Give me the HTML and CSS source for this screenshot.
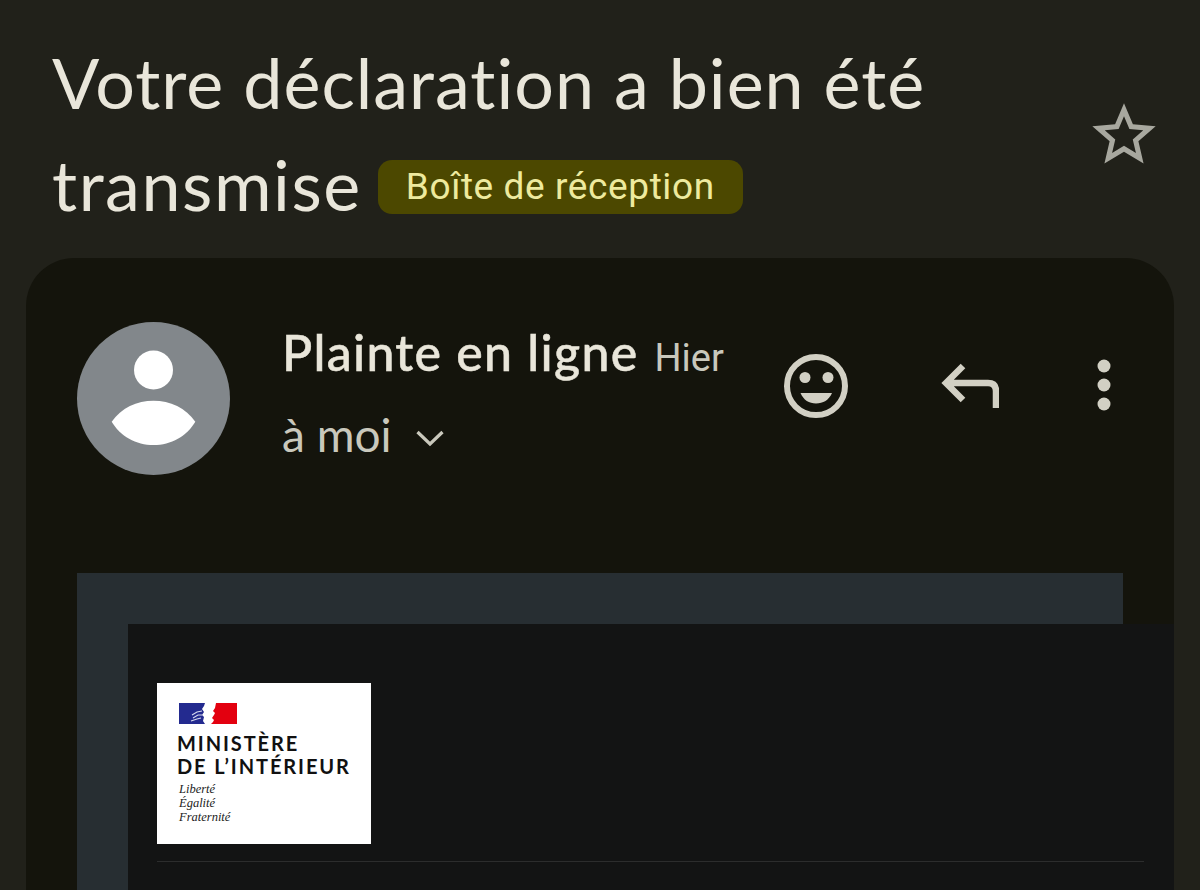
FILE: index.html
```html
<!DOCTYPE html>
<html lang="fr">
<head>
<meta charset="utf-8">
<title>Votre déclaration a bien été transmise</title>
<link rel="stylesheet" href="styles.css">
</head>
<body>
<div class="page">
  <header class="subject">
    <h1 class="title">Votre déclaration a bien été<br><span class="word">transmise</span><span class="chip">Boîte de réception</span></h1>
    <svg class="star" viewBox="0 0 24 24" aria-hidden="true"><path fill="#a8a89f" d="M22 9.24l-7.19-.62L12 2 9.19 8.63 2 9.24l5.46 4.73L5.82 21 12 17.27 18.18 21l-1.63-7.03L22 9.24zM12 15.4l-3.76 2.27 1-4.28-3.32-2.88 4.38-.38L12 6.1l1.71 4.04 4.38.38-3.32 2.88 1 4.28L12 15.4z"/></svg>
  </header>
  <main class="card">
    <div class="meta">
      <svg class="avatar" viewBox="0 0 153 153" aria-hidden="true">
        <circle cx="76.5" cy="76.5" r="76.5" fill="#82878b"/>
        <circle cx="76.5" cy="48" r="19.5" fill="#fff"/>
        <path d="M34.700 99.700C44 86 60 78.700 76.500 78.700C93 78.700 109 86 118.300 99.700C110 114 94 123 76.500 123C59 123 43 114 34.700 99.700Z" fill="#fff"/>
      </svg>
      <div class="who">
        <div class="line1"><span class="name">Plainte en ligne</span><span class="when">Hier</span></div>
        <div class="line2"><span>à moi</span>
          <svg class="chev" viewBox="0 0 30 18" aria-hidden="true"><path d="M2.500 3 15 15 27.500 3" fill="none" stroke="#c9c8bc" stroke-width="3.200"/></svg>
        </div>
      </div>
      <div class="actions">
        <svg class="act-smile" viewBox="0 0 66 66" aria-hidden="true">
          <circle cx="33" cy="33" r="29" fill="none" stroke="#d2d0c4" stroke-width="6"/>
          <circle cx="22" cy="24.500" r="5.500" fill="#d2d0c4"/><circle cx="45" cy="24.500" r="5.500" fill="#d2d0c4"/>
          <path d="M17.500 40H49C46 47 40 50.500 33 50.500S20.500 47 17.500 40Z" fill="#d2d0c4"/>
        </svg>
        <svg class="act-reply" viewBox="0 0 58 46" aria-hidden="true"><path d="M22 4 5 21 22 38M5 21H47Q55 21 55 29V46" fill="none" stroke="#d2d0c4" stroke-width="6.500"/></svg>
        <svg class="act-more" viewBox="0 0 14 52" aria-hidden="true"><circle cx="7" cy="7" r="6.500" fill="#d2d0c4"/><circle cx="7" cy="26" r="6.500" fill="#d2d0c4"/><circle cx="7" cy="45" r="6.500" fill="#d2d0c4"/></svg>
      </div>
    </div>
    <section class="mail-outer">
      <div class="mail-inner">
        <div class="logo">
          <svg class="flag" viewBox="0 0 58 21" aria-hidden="true">
            <path d="M0 0H26L25 3 23 6 25 9 23 12 25 14 24 18 26 21H0Z" fill="#232a8f"/>
            <path d="M37 0H58V21H32L34 19 35 17 33 15 35 12 36 10 34 8 36 5Z" fill="#e3000f"/>
            <path d="M13 12 18 9 23 8M14 15 19 12 23 12M12 18 18 16 22 15" fill="none" stroke="#d5d8ee" stroke-width="1.100"/>
          </svg>
          <div class="min">MINISTÈRE<br>DE L’INTÉRIEUR</div>
          <div class="motto">Liberté<br>Égalité<br>Fraternité</div>
        </div>
        <div class="divider"></div>
      </div>
    </section>
  </main>
</div>
</body>
</html>
```

FILE: styles.css
```css
* { box-sizing: border-box; }
html, body { margin: 0; height: 100%; overflow: hidden; background: #21211a; }
.page { width: 1200px; height: 890px; overflow: hidden; padding: 0 26px; font-family: "Open Sans", "Liberation Sans", sans-serif; }
.subject { height: 258px; position: relative; padding: 31px 0 0 26px; }
.title { margin: 0; height: 204px; font-size: 70px; line-height: 102px; font-weight: 400; color: #e9e6da; font-family: "Lato", sans-serif; white-space: nowrap; letter-spacing: 1px; }
.word { letter-spacing: 1.550px; }
.chip { display: inline-flex; align-items: center; height: 54px; margin-left: 16px; padding: 0 28px; border-radius: 14px; background: #4c4800; color: #eeea9e; font: 400 37px/1 "Roboto", sans-serif; vertical-align: 12px; letter-spacing: 0.6px; }
.star { position: absolute; left: 1060px; top: 97px; width: 76px; height: 76px; }
.card { height: 632px; background: #14140c; border-radius: 48px 48px 0 0; padding: 64px 51px 0; overflow: hidden; }
.meta { display: flex; height: 251px; }
.avatar { width: 153px; height: 153px; flex: none; }
.who { margin-left: 52px; width: 511px; }
.line1 { display: flex; align-items: baseline; height: 60px; }
.name { font: 500 50px/60px "Lato", sans-serif; color: #e9e6da; letter-spacing: 1.300px; -webkit-text-stroke: 0.5px #e9e6da; }
.when { font: 400 38px/60px "Roboto", sans-serif; color: #c9c8bc; margin-left: 16px; }
.line2 { display: flex; align-items: center; height: 62px; margin-top: 22px; font: 400 46px/62px "Lato", sans-serif; color: #c9c8bc; }
.chev { width: 30px; height: 18px; margin-left: 23px; margin-top: 5px; }
.actions { position: relative; flex: 1; }
.act-smile { position: absolute; left: -10px; top: 31px; width: 66px; height: 66px; }
.act-reply { position: absolute; left: 148px; top: 40px; width: 58px; height: 46px; }
.act-more { position: absolute; left: 304px; top: 37px; width: 14px; height: 52px; }
.mail-outer { width: 1046px; height: 400px; background: #272e32; padding: 51px 0 0 51px; }
.mail-inner { width: 1046px; height: 400px; background: #131414; padding: 59px 30px 0 29px; }
.logo { width: 214px; height: 161px; background: #fff; padding: 20px 0 0 20px; color: #111; }
.flag { display: block; width: 58px; height: 21px; margin-left: 2px; }
.min { font: 700 20px/23px "Lato", sans-serif; margin-top: 8px; white-space: nowrap; color: #111; letter-spacing: 1.900px; }
.motto { font: italic 400 12.500px/14px "Liberation Serif", serif; margin-top: 4px; margin-left: 2px; color: #222; }
.divider { height: 1px; background: #2c2d2d; margin-top: 17px; }
```
